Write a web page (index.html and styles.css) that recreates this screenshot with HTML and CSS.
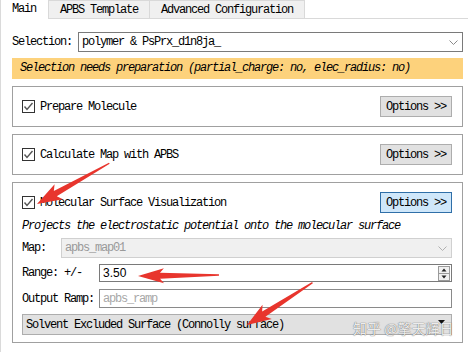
FILE: index.html
```html
<!DOCTYPE html>
<html lang="en">
<head>
  <meta charset="UTF-8" />
  <title>APBS Electrostatics</title>
  <link rel="stylesheet" href="styles.css">
</head>
<body>
<div class="window">
  <div class="tabs">
    <div class="tab active">Main</div>
    <div class="tab">APBS Template</div>
    <div class="tab">Advanced Configuration</div>
    <div class="tab-fill"></div>
  </div>

  <div class="pane">
    <div class="sel-row">
      <span class="sel-label">Selection:</span>
      <div class="combo">
        <span>polymer &amp; PsPrx_d1n8ja_</span>
        <svg class="chev" width="9" height="5" viewBox="0 0 9 5"><polyline points="0.5,0.5 4.5,4.5 8.5,0.5" fill="none" stroke="#8a8a8a" stroke-width="1"/></svg>
      </div>
    </div>

    <div class="banner">Selection needs preparation (partial_charge: no, elec_radius: no)</div>

    <div class="group">
      <div class="group-head">
        <label class="check"><span class="box"><svg width="11" height="11" viewBox="0 0 11 11"><polyline points="1.5,5.5 4,8.5 9.5,2" fill="none" stroke="#555" stroke-width="1.4"/></svg></span>Prepare Molecule</label>
        <button class="btn">Options &gt;&gt;</button>
      </div>
    </div>

    <div class="group">
      <div class="group-head">
        <label class="check"><span class="box"><svg width="11" height="11" viewBox="0 0 11 11"><polyline points="1.5,5.5 4,8.5 9.5,2" fill="none" stroke="#555" stroke-width="1.4"/></svg></span>Calculate Map with APBS</label>
        <button class="btn">Options &gt;&gt;</button>
      </div>
    </div>

    <div class="group last">
      <div class="group-head">
        <label class="check"><span class="box"><svg width="11" height="11" viewBox="0 0 11 11"><polyline points="1.5,5.5 4,8.5 9.5,2" fill="none" stroke="#555" stroke-width="1.4"/></svg></span>Molecular Surface Visualization</label>
        <button class="btn focus">Options &gt;&gt;</button>
      </div>
      <div class="note">Projects the electrostatic potential onto the molecular surface</div>

      <div class="field-row map-row">
        <span class="field-label short">Map:</span>
        <div class="combo disabled">
          <span>apbs_map01</span>
          <svg class="chev" width="9" height="5" viewBox="0 0 9 5"><polyline points="0.5,0.5 4.5,4.5 8.5,0.5" fill="none" stroke="#b0b0b0" stroke-width="1"/></svg>
        </div>
      </div>

      <div class="field-row range-row">
        <span class="field-label">Range: +/-</span>
        <div class="spin">
          <span class="spin-value">3.50</span>
          <div class="spin-btns">
            <svg width="12" height="15" viewBox="0 0 12 15">
              <rect x="0.5" y="0.5" width="11" height="14" fill="#f0f0f0" stroke="#9a9a9a"/>
              <line x1="1" y1="7.5" x2="11" y2="7.5" stroke="#9a9a9a"/>
              <polygon points="3.5,5.5 6,2.5 8.5,5.5" fill="#222"/>
              <polygon points="3.5,9.5 8.5,9.5 6,12.5" fill="#222"/>
            </svg>
          </div>
        </div>
      </div>

      <div class="field-row ramp-row">
        <span class="field-label">Output Ramp:</span>
        <div class="text-input"><span class="placeholder">apbs_ramp</span></div>
      </div>

      <div class="big-combo">
        <span>Solvent Excluded Surface (Connolly surface)</span>
        <svg class="drop" width="7" height="4" viewBox="0 0 7 4"><polygon points="0,0 7,0 3.5,4" fill="#111"/></svg>
      </div>
    </div>
  </div>

  <svg class="arrows" width="468" height="352" viewBox="0 0 468 352">
    <g fill="#e8352d">
      <polygon transform="translate(36 204) rotate(150.6)" points="0,0 -25,-8.5 -21,-3 -83,-0.7 -83,0.7 -21,3 -25,8.5"/>
      <polygon transform="translate(137 276) rotate(179.3)" points="0,0 -26,-7.5 -22,-3 -81,-0.7 -81,0.7 -22,3 -26,7.5"/>
      <polygon transform="translate(246 325) rotate(147.1)" points="0,0 -24,-8.5 -20,-3 -78,-0.7 -78,0.7 -20,3 -24,8.5"/>
    </g>
  </svg>
  <div class="watermark">知乎 @擎天辉日</div>
</div>
</body>
</html>
```

FILE: styles.css
```css
body {
  margin: 0;
  background: #ffffff;
  font-family: "Liberation Mono", monospace;
  font-size: 12px;
  letter-spacing: -1.2px;
  color: #000;
}
.window {
  position: relative;
  width: 468px;
  height: 352px;
  overflow: hidden;
  box-sizing: border-box;
  border-left: 1px solid #dadada;
  background: #fff;
}
.tabs {
  display: flex;
  height: 19px;
}
.tab {
  box-sizing: border-box;
  height: 19px;
  line-height: 18px;
  padding: 0 11px;
  background: #f0f0f0;
  border: 1px solid #d9d9d9;
  margin-left: -1px;
  white-space: nowrap;
}
.tab.active {
  width: 48px;
  margin-left: 0;
  padding-left: 11px;
  background: #fff;
  border: none;
}
.tab-fill {
  flex: 1;
  border-bottom: 1px solid #d9d9d9;
}
.pane {
  padding: 0 5px 0 11px;
}
.sel-row {
  display: flex;
  align-items: center;
  margin-top: 13px;
}
.sel-label {
  width: 66px;
}
.combo {
  flex: 1;
  height: 20px;
  box-sizing: border-box;
  border: 1px solid #7a7a7a;
  padding: 0 4px 0 3px;
  display: flex;
  align-items: center;
  justify-content: space-between;
}
.combo.disabled {
  background: #f0f0f0;
  border-color: #d0d0d0;
  color: #9a9a9a;
}
.banner {
  margin-top: 6px;
  height: 21px;
  line-height: 21px;
  padding-left: 8px;
  background: #fdd27c;
  font-style: italic;
  white-space: nowrap;
}
.group {
  margin-top: 7px;
  border: 1px solid #a0a0a0;
  padding: 9px 10px 9px 9px;
}
.group:first-of-type {
  margin-top: 8px;
}
.group.last {
  padding-right: 10px;
  padding-bottom: 7px;
}
.group-head {
  display: flex;
  align-items: center;
  justify-content: space-between;
  height: 21px;
}
.check {
  display: flex;
  align-items: center;
  gap: 5px;
}
.box {
  width: 13px;
  height: 13px;
  box-sizing: border-box;
  border: 1px solid #333;
  background: #fff;
  display: flex;
}
.btn {
  width: 72px;
  height: 21px;
  padding: 0;
  background: #e1e1e1;
  border: 1px solid #adadad;
  font: inherit;
  letter-spacing: inherit;
  color: #000;
}
.btn.focus {
  background: #cfe7fa;
  border-color: #2f6fa8;
}
.note {
  margin-top: 6px;
  height: 14px;
  line-height: 14px;
  font-style: italic;
  white-space: nowrap;
}
.field-row {
  display: flex;
  align-items: center;
}
.field-label {
  width: 77px;
}
.field-label.short {
  width: 39px;
}
.map-row {
  margin-top: 5px;
}
.range-row {
  margin-top: 6px;
}
.ramp-row {
  margin-top: 7px;
}
.spin,
.text-input {
  flex: 1;
  height: 18px;
  box-sizing: border-box;
  border: 1px solid #7a7a7a;
  padding: 0 1px 0 3px;
  display: flex;
  align-items: center;
  justify-content: space-between;
}
.text-input {
  height: 19px;
  border-color: #8a8a8a;
}
.spin-value {
  font-family: "Liberation Sans", "Noto Sans", sans-serif;
  font-size: 12px;
  letter-spacing: 0;
}
.spin-btns {
  display: flex;
}
.placeholder {
  color: #a8a8a8;
}
.big-combo {
  margin-top: 6px;
  height: 21px;
  box-sizing: border-box;
  background: #e1e1e1;
  border: 1px solid #adadad;
  padding: 0 6px 0 3px;
  display: flex;
  align-items: center;
  justify-content: space-between;
  white-space: nowrap;
}
.drop {
  margin-top: -6px;
}
.arrows {
  position: absolute;
  left: 0;
  top: 0;
  pointer-events: none;
}
.watermark {
  position: absolute;
  left: 352px;
  top: 318px;
  font-family: "Noto Sans CJK SC", sans-serif;
  font-size: 14px;
  letter-spacing: 0;
  color: rgba(255, 255, 255, 0.9);
  text-shadow: 0 0 1px rgba(80, 80, 80, 0.8), 0 0 1px rgba(80, 80, 80, 0.6);
  white-space: nowrap;
}
```
